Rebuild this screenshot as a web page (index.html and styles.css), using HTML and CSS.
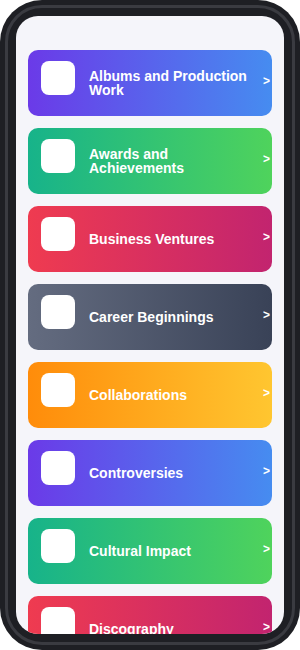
FILE: index.html
```html
<!DOCTYPE html>
<html lang="en">

<head>
    <meta charset="UTF-8">
    <meta name="viewport" content="width=device-width, initial-scale=1.0">
    <title>Topics</title>
    <link rel="stylesheet" href="styles.css">
</head>

<body>
    <div class="phone">
        <div class="bezel">
            <div class="screen">
                <ul class="topics">
                    <li class="topic violet"><span class="icon"></span><span class="title">Albums and Production Work</span><span class="chevron">&gt;</span></li>
                    <li class="topic green"><span class="icon"></span><span class="title">Awards and Achievements</span><span class="chevron">&gt;</span></li>
                    <li class="topic rose"><span class="icon"></span><span class="title">Business Ventures</span><span class="chevron">&gt;</span></li>
                    <li class="topic slate"><span class="icon"></span><span class="title">Career Beginnings</span><span class="chevron">&gt;</span></li>
                    <li class="topic amber"><span class="icon"></span><span class="title">Collaborations</span><span class="chevron">&gt;</span></li>
                    <li class="topic violet"><span class="icon"></span><span class="title">Controversies</span><span class="chevron">&gt;</span></li>
                    <li class="topic green"><span class="icon"></span><span class="title">Cultural Impact</span><span class="chevron">&gt;</span></li>
                    <li class="topic rose"><span class="icon"></span><span class="title">Discography</span><span class="chevron">&gt;</span></li>
                </ul>
            </div>
        </div>
    </div>
</body>

</html>
```

FILE: styles.css
```css
* {
    box-sizing: border-box;
}

body {
    margin: 0;
    background: #fff;
    font-family: "Liberation Sans", Arial, sans-serif;
}

.phone {
    width: 300px;
    height: 650px;
    padding: 5px;
    border-radius: 42px;
    background: #1e1f24;
}

.bezel {
    height: 100%;
    padding: 8px;
    border: 3px solid #3a3b41;
    border-radius: 37px;
}

.screen {
    height: 100%;
    padding: 34px 12px 0;
    border-radius: 22px;
    background: #f5f5fa;
    overflow: hidden;
}

.topics {
    list-style: none;
    margin: 0;
    padding: 0;
    display: flex;
    flex-direction: column;
    gap: 12px;
}

.topic {
    display: flex;
    align-items: center;
    height: 66px;
    flex-shrink: 0;
    padding: 0 2px 0 13px;
    border-radius: 10px;
    color: #fff;
}

.topic .icon {
    align-self: flex-start;
    flex-shrink: 0;
    width: 34px;
    height: 34px;
    margin-top: 11px;
    border-radius: 8px;
    background: #fff;
}

.topic .title {
    flex: 1;
    padding: 0 12px 0 14px;
    font-size: 14px;
    font-weight: bold;
    line-height: 14px;
}

.topic .chevron {
    margin-bottom: 4px;
    font-size: 12px;
    font-weight: bold;
}

.violet {
    background: linear-gradient(90deg, #6b3ae8, #468cf0);
}

.green {
    background: linear-gradient(90deg, #17b38a, #4fd35c);
}

.rose {
    background: linear-gradient(90deg, #ef3b50, #c2246f);
}

.slate {
    background: linear-gradient(90deg, #646c80, #394257);
}

.amber {
    background: linear-gradient(90deg, #ff8c0a, #ffc630);
}
```
